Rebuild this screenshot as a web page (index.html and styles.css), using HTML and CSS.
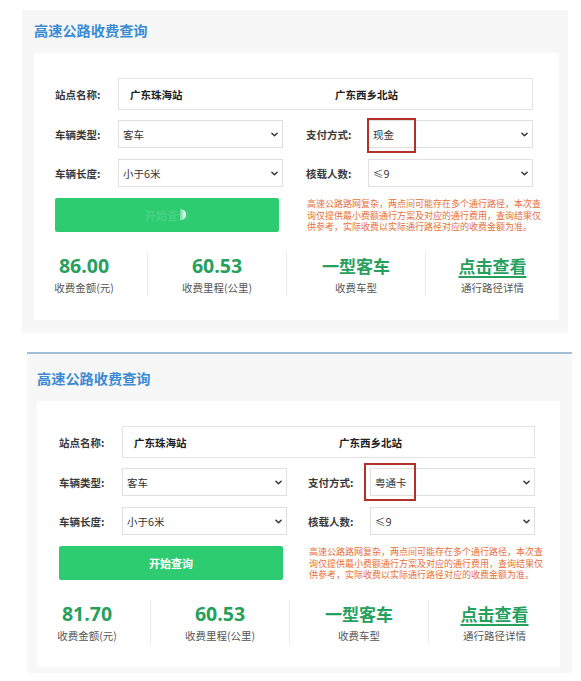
FILE: index.html
```html
<!DOCTYPE html>
<html lang="zh-CN">
<head>
<meta charset="utf-8">
<title>高速公路收费查询</title>
<link rel="stylesheet" href="styles.css">
</head>
<body>
<section class="panel panel-a">
  <h2 class="title">高速公路收费查询</h2>
  <div class="card">
    <div class="row station-row">
      <span class="label">站点名称:</span>
      <div class="station-box"><span class="from">广东珠海站</span><span class="to">广东西乡北站</span></div>
    </div>
    <div class="row grid">
      <div class="field"><span class="label">车辆类型:</span><div class="select"><span>客车</span><svg class="chev" viewBox="0 0 8 5"><polyline points="1,1 4,4 7,1"/></svg></div></div>
      <div class="field"><span class="label">支付方式:</span><div class="select hl"><span>现金</span><svg class="chev" viewBox="0 0 8 5"><polyline points="1,1 4,4 7,1"/></svg><i class="mark"></i></div></div>
    </div>
    <div class="row grid">
      <div class="field"><span class="label">车辆长度:</span><div class="select"><span>小于6米</span><svg class="chev" viewBox="0 0 8 5"><polyline points="1,1 4,4 7,1"/></svg></div></div>
      <div class="field"><span class="label">核载人数:</span><div class="select"><span>≤9</span><svg class="chev" viewBox="0 0 8 5"><polyline points="1,1 4,4 7,1"/></svg></div></div>
    </div>
    <div class="row grid action-row">
      <button class="btn loading"><span class="btn-text">开始查询</span></button>
      <p class="note">高速公路路网复杂，两点间可能存在多个通行路径，本次查<br>询仅提供最小费额通行方案及对应的通行费用，查询结果仅<br>供参考，实际收费以实际通行路径对应的收费金额为准。</p>
    </div>
    <div class="stats">
      <div class="stat first"><div class="num">86.00</div><div class="cap">收费金额(元)</div></div>
      <div class="stat"><div class="num">60.53</div><div class="cap">收费里程(公里)</div></div>
      <div class="stat"><div class="num cn">一型客车</div><div class="cap">收费车型</div></div>
      <div class="stat"><div class="num cn link">点击查看</div><div class="cap">通行路径详情</div></div>
    </div>
  </div>
</section>

<section class="panel panel-b">
  <h2 class="title">高速公路收费查询</h2>
  <div class="card">
    <div class="row station-row">
      <span class="label">站点名称:</span>
      <div class="station-box"><span class="from">广东珠海站</span><span class="to">广东西乡北站</span></div>
    </div>
    <div class="row grid">
      <div class="field"><span class="label">车辆类型:</span><div class="select"><span>客车</span><svg class="chev" viewBox="0 0 8 5"><polyline points="1,1 4,4 7,1"/></svg></div></div>
      <div class="field"><span class="label">支付方式:</span><div class="select hl"><span>粤通卡</span><svg class="chev" viewBox="0 0 8 5"><polyline points="1,1 4,4 7,1"/></svg><i class="mark"></i></div></div>
    </div>
    <div class="row grid">
      <div class="field"><span class="label">车辆长度:</span><div class="select"><span>小于6米</span><svg class="chev" viewBox="0 0 8 5"><polyline points="1,1 4,4 7,1"/></svg></div></div>
      <div class="field"><span class="label">核载人数:</span><div class="select"><span>≤9</span><svg class="chev" viewBox="0 0 8 5"><polyline points="1,1 4,4 7,1"/></svg></div></div>
    </div>
    <div class="row grid action-row">
      <button class="btn"><span class="btn-text">开始查询</span></button>
      <p class="note">高速公路路网复杂，两点间可能存在多个通行路径，本次查<br>询仅提供最小费额通行方案及对应的通行费用，查询结果仅<br>供参考，实际收费以实际通行路径对应的收费金额为准。</p>
    </div>
    <div class="stats">
      <div class="stat first"><div class="num">81.70</div><div class="cap">收费金额(元)</div></div>
      <div class="stat"><div class="num">60.53</div><div class="cap">收费里程(公里)</div></div>
      <div class="stat"><div class="num cn">一型客车</div><div class="cap">收费车型</div></div>
      <div class="stat"><div class="num cn link">点击查看</div><div class="cap">通行路径详情</div></div>
    </div>
  </div>
</section>
</body>
</html>
```

FILE: styles.css
```css
* { box-sizing: border-box; }

body {
  margin: 0;
  background: #fff;
  font-family: "Noto Sans CJK SC", "Noto Sans", sans-serif;
  color: #333;
}

.panel {
  background: #f7f7f7;
}

.panel-a {
  margin: 10px 0 0 22px;
  width: 546px;
  padding: 10px 9px 13px 12px;
}

.panel-b {
  margin: 19px 0 0 27px;
  width: 545px;
  border-top: 2px solid #a3bfd8;
  padding: 14px 12px 6px 10px;
}

.title {
  margin: 0 0 13px;
  font-size: 14.2px;
  line-height: 20px;
  font-weight: 700;
  color: #3b8bd4;
}

.card {
  background: #fff;
}

.panel-a .card { padding: 25px 26px 24px 21px; }
.panel-b .card { padding: 25px 25px 23px 22px; }

.row { display: flex; align-items: center; }

.station-row { height: 32px; margin-bottom: 10px; }

.grid {
  display: grid;
  grid-template-columns: 228px 1fr;
  column-gap: 23px;
  height: 28px;
  margin-bottom: 11px;
}
.panel-b .grid { column-gap: 21px; }

.action-row {
  height: 34px;
  margin-bottom: 20px;
  align-items: start;
}

.label {
  flex: 0 0 63px;
  width: 63px;
  font-size: 10.5px;
  font-weight: 700;
  color: #3a3a3a;
  white-space: nowrap;
}

.field { display: flex; align-items: center; height: 28px; }
.field + .field .label { flex-basis: 62px; width: 62px; }

.station-box {
  flex: 1;
  height: 32px;
  border: 1px solid #e3e3e3;
  display: flex;
  align-items: center;
  font-size: 10.5px;
  font-weight: 700;
  color: #222;
}
.station-box .from { width: 216px; padding-left: 11px; }

.select {
  position: relative;
  flex: 1;
  height: 28px;
  border: 1px solid #e0e0e0;
  display: flex;
  align-items: center;
  justify-content: space-between;
  padding: 0 4px 0 4px;
  font-family: "Noto Sans", "Noto Sans CJK SC", sans-serif;
  font-size: 10.5px;
  color: #333;
  background: #fff;
}

.chev {
  width: 7px;
  height: 5px;
  fill: none;
  stroke: #333;
  stroke-width: 1.6;
  stroke-linecap: round;
  stroke-linejoin: round;
}

.mark {
  position: absolute;
  border: 2px solid #b3302b;
}
.panel-a .mark { left: -2px; top: -3px; width: 49px; height: 35px; }
.panel-b .mark { left: -7px; top: -6px; width: 52px; height: 38px; }

.btn {
  width: 224px;
  height: 34px;
  border: 0;
  border-radius: 2px;
  background: #2ecc71;
  color: #fff;
  font-family: inherit;
  font-size: 11px;
  font-weight: 700;
  padding: 0;
}
.btn-text { position: relative; }
.btn.loading .btn-text { color: rgba(255, 255, 255, 0.12); }
.btn.loading .btn-text::after {
  content: "";
  position: absolute;
  right: 3px;
  top: 2px;
  width: 6px;
  height: 11px;
  border-radius: 0 6px 6px 0;
  background: linear-gradient(90deg, rgba(255,255,255,0.25), #fff);
}

.note {
  margin: 0;
  padding-left: 1px;
  font-size: 9px;
  line-height: 11.5px;
  letter-spacing: 0;
  white-space: nowrap;
  color: #e5703a;
}

.stats {
  display: grid;
  grid-template-columns: 113px 139px 139px 1fr;
}
.panel-a .stats { margin: 0 -26px 0 -21px; }
.panel-b .stats { margin: 0 -25px 0 -22px; }

.stat {
  height: 44px;
  padding-top: 2px;
  text-align: center;
  border-left: 1px solid #ececec;
}
.stat.first { border-left: 0; padding-right: 13px; }

.num {
  font-family: "Open Sans", "Noto Sans", sans-serif;
  font-size: 19.5px;
  line-height: 24px;
  font-weight: 700;
  color: #27a05e;
}
.num.cn {
  font-family: "Noto Sans CJK SC", sans-serif;
  font-size: 17px;
}
.num.link {
  text-decoration: underline;
  text-decoration-thickness: 2px;
  text-underline-offset: 3px;
}

.cap {
  margin-top: 2px;
  font-size: 10.5px;
  line-height: 16px;
  color: #555;
}
```
